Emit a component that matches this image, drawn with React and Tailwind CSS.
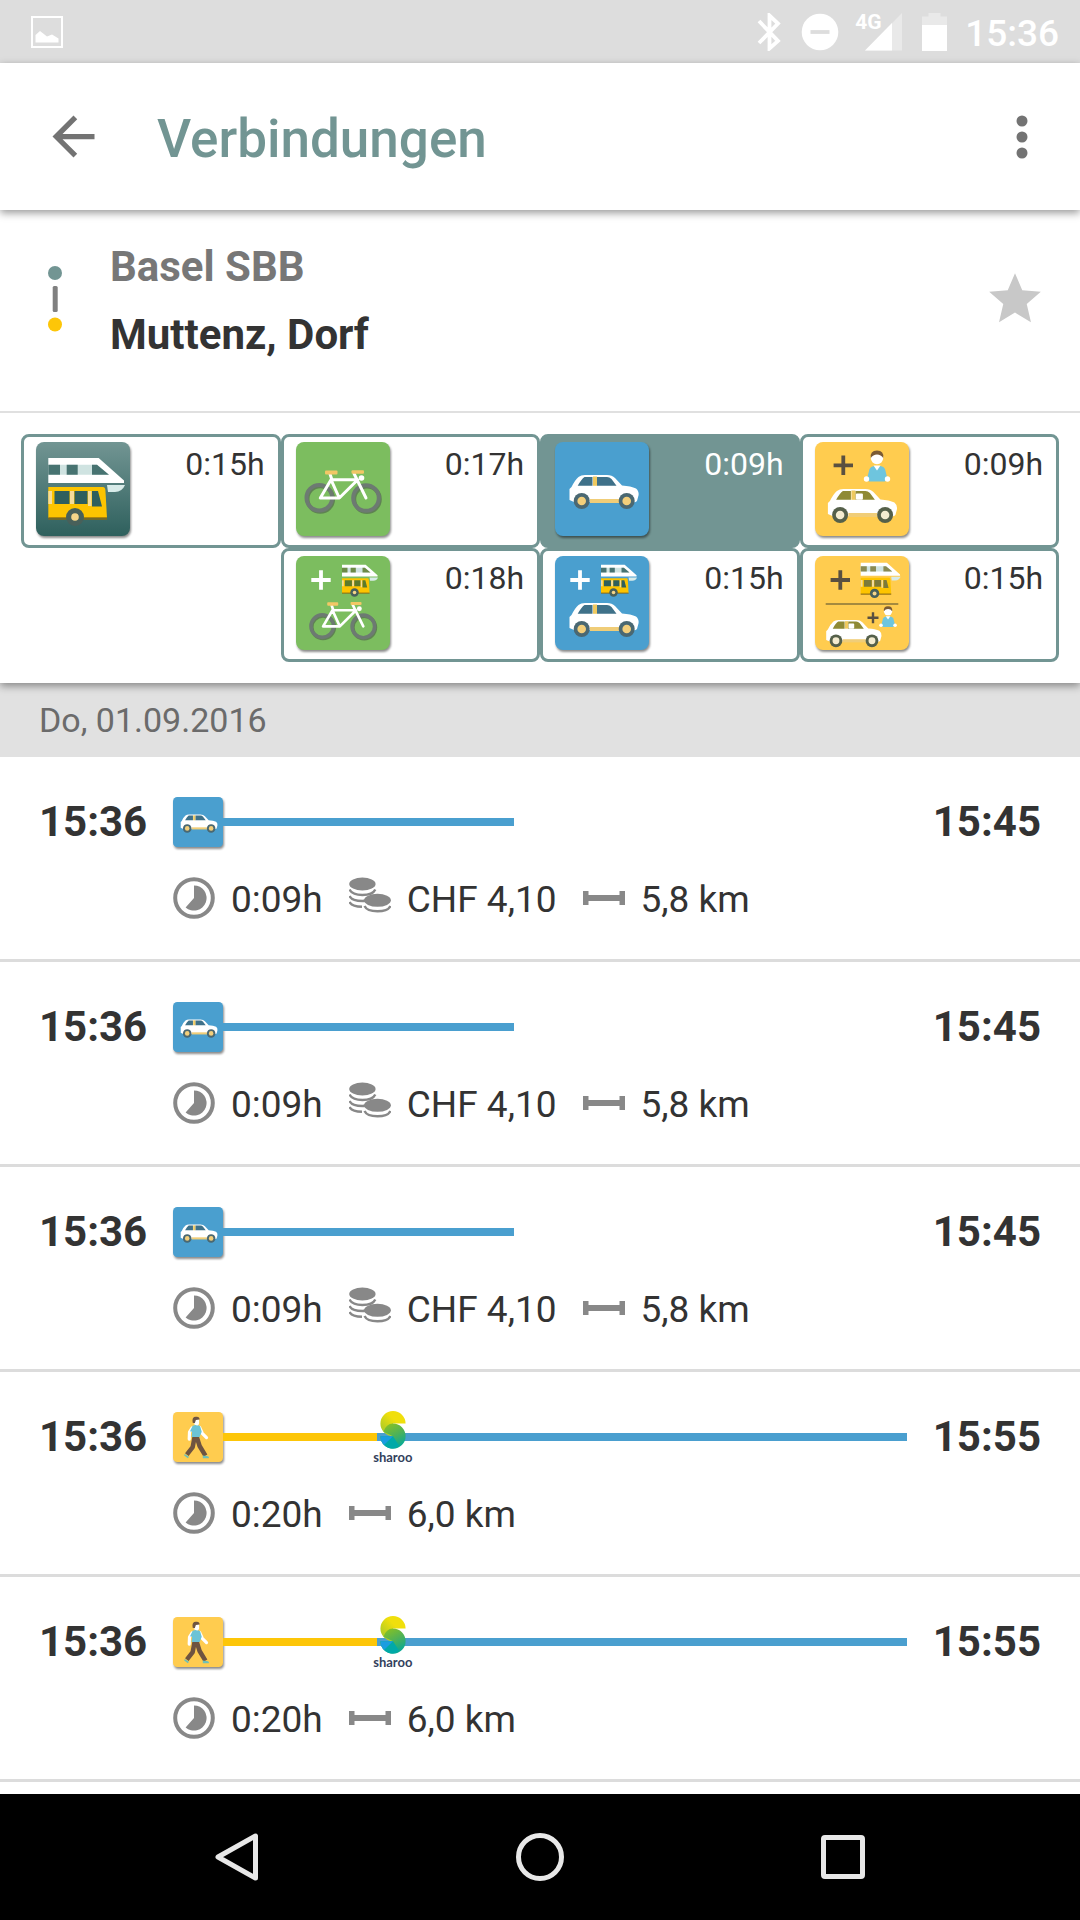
import React, { useState } from 'react';

const Tile = ({ color, size = 94, label, children }) => (
  <svg
    viewBox="0 0 94 94"
    width={size}
    height={size}
    role="img"
    aria-label={label}
    className="shrink-0 drop-shadow-[1px_2px_1px_rgba(0,0,0,0.45)]"
  >
    <defs>
      <linearGradient id="tealTile" x1="0" y1="0" x2="0" y2="1">
        <stop offset="0" stopColor="#729593" />
        <stop offset="1" stopColor="#2e605d" />
      </linearGradient>
    </defs>
    <rect width="94" height="94" rx="8" fill={color} />
    {children}
  </svg>
);

const TrainBus = ({ glass = '#2f5f5d', transform }) => (
  <g transform={transform}>
    <path d="M12.3 16H62.7L88 38.5V41H12.3Z" fill="#fff" />
    <path d="M12.3 22.7H61L73 32.7H12.3Z" fill="#cfe3e1" />
    <path d="M12.3 22.7H24V32.7H12.3ZM30.7 22.7H41.7V32.7H30.7ZM56 22.7H61L73 32.7H56Z" fill={glass} opacity="0.85" />
    <path d="M71 43H89Q86 50 79 50H72Z" fill="#d8ebe9" />
    <path d="M12.3 45H67Q69 45 69.4 48L71 76H12.3Z" fill="#fdc400" />
    <path d="M12.3 75H71V78H12.3Z" fill="#8a6a10" opacity="0.7" />
    <path d="M12.3 49H16V62H12.3ZM34 49H38V62H34ZM52 49H55.5V64H52Z" fill="#f5dc9a" />
    <path d="M18.5 49H33.5V62H18.5ZM38.5 49H51.5V62H38.5ZM56 49H62L66 64.5H56Z" fill={glass} />
    <circle cx="39" cy="75" r="9" fill="#48605a" />
    <circle cx="39" cy="75" r="3.8" fill="#f5d58a" />
  </g>
);

const Bike = ({ transform }) => (
  <g transform={transform} fill="none">
    <g stroke="#4d5c4a" strokeOpacity="0.6" strokeWidth="4">
      <circle cx="24.3" cy="57" r="12.8" />
      <circle cx="71" cy="57.3" r="12.8" />
    </g>
    <g stroke="#6d7a72" strokeWidth="4">
      <circle cx="23.3" cy="55.7" r="12.8" />
      <circle cx="70" cy="56" r="12.8" />
    </g>
    <path d="M35 37.7L24.3 56H43.3L61.7 37.7H35L43.3 56M34 32L36 38M58 31.5L70 56" stroke="#fff" strokeWidth="3" strokeLinejoin="round" strokeLinecap="round" />
    <circle cx="65.5" cy="36" r="2.8" fill="#fff" />
    <rect x="29" y="28.5" width="12.5" height="4" rx="1" fill="#f2c766" />
    <rect x="55.5" y="28.3" width="12.5" height="3.4" rx="1" fill="#f2c766" />
  </g>
);

const Car = ({ glass = '#3f7189', ring = '#4a6872', hub = '#f3cf7b', driver, transform }) => (
  <g transform={transform}>
    <path d="M14.500 58V47L16.500 45Q20 38 23.500 35Q26 33 30 33H52Q57 33 60 36L67 43.500Q76 44 81 46.500Q84 49 83.600 53L82 59Q80 61 78 60H62V59H36V60H19Z" fill="#fff" />
    <path d="M35 57H64V61H35Z" fill="#f0cd78" />
    <path d="M22.700 43.800Q26.500 37 29.500 35H37.500V43.800ZM42 35H52Q54.500 35 56.500 37L61.500 43.800H42Z" fill={glass} />
    <path d="M38 34.500H42V43.800H38Z" fill="#efc95f" />
    {driver && <rect x="42.500" y="37.500" width="7" height="6.300" rx="1" fill="#fff" />}
    <circle cx="26.700" cy="59" r="8" fill={ring} />
    <circle cx="71.700" cy="59" r="8" fill={ring} />
    <circle cx="26.700" cy="59" r="4.300" fill={hub} />
    <circle cx="71.700" cy="59" r="4.300" fill={hub} />
  </g>
);

const Person = ({ transform }) => (
  <g transform={transform}>
    <path d="M52 37L54.500 27Q55.500 24.500 59 24H65.500Q69 24.500 70 27L72.500 37L70 39.500H54Z" fill="#6ec5de" />
    <path d="M58.500 23.500H65.500L62 28.500Z" fill="#fff" />
    <circle cx="62" cy="16" r="6.200" fill="#fff" />
    <path d="M55.800 16Q54.800 8.500 62 8.500T68.200 16Q66 12.500 62 12.500T55.800 16Z" fill="#7a5a34" />
    <circle cx="51.500" cy="37" r="2.700" fill="#fff" />
    <circle cx="72.500" cy="37" r="2.700" fill="#fff" />
  </g>
);

const Plus = ({ x, y, r = 9.7, w = 3.8, color = '#fff' }) => (
  <path d={`M${x - r} ${y}H${x + r}M${x} ${y - r}V${y + r}`} stroke={color} strokeWidth={w} />
);

const YELLOW_CAR = { glass: '#8f8a35', ring: '#55604a', hub: '#f4ecd0', driver: true };

const tiles = {
  transit: () => (
    <Tile color="url(#tealTile)" label="ÖV">
      <TrainBus />
    </Tile>
  ),
  bike: () => (
    <Tile color="#7cbd5f" label="Velo">
      <Bike />
    </Tile>
  ),
  car: (size) => (
    <Tile color="#4a9fcf" label="Auto" size={size}>
      <Car />
    </Tile>
  ),
  ride: () => (
    <Tile color="#ffcc4f" label="Mitfahren">
      <Plus x={28.3} y={23.3} color="#5a5040" />
      <Person />
      <Car {...YELLOW_CAR} transform="translate(-1.6 14)" />
    </Tile>
  ),
  bikeTransit: () => (
    <Tile color="#7cbd5f" label="Velo und ÖV">
      <Plus x={25} y={24} />
      <TrainBus transform="translate(40.2 1.2) scale(0.47)" glass="#5b7a2c" />
      <Bike transform="translate(5.7 21.1) scale(0.88)" />
    </Tile>
  ),
  carTransit: () => (
    <Tile color="#4a9fcf" label="Auto und ÖV">
      <Plus x={25} y={24} />
      <TrainBus transform="translate(40.2 1.2) scale(0.47)" />
      <Car transform="translate(0 14)" />
    </Tile>
  ),
  rideTransit: () => (
    <Tile color="#ffcc4f" label="Mitfahren und ÖV">
      <Plus x={25.3} y={24} color="#5a5040" />
      <TrainBus transform="translate(39.3 -1.6) scale(0.52)" glass="#7c7a3a" />
      <path d="M10.7 48H83.3" stroke="#a58a3e" strokeWidth="2" />
      <Plus x={58} y={61.7} r={5.5} w={2.4} color="#5a5040" />
      <Person transform="translate(31.5 44.5) scale(0.67)" />
      <Car {...YELLOW_CAR} transform="translate(-0.4 37.6) scale(0.8)" />
    </Tile>
  ),
  walk: (size) => (
    <Tile color="#ffcc4f" label="Zu Fuss" size={size}>
      <path d="M44 45L50 64L61 82M41 45L37 66L26 80" fill="none" stroke="#6f5440" strokeWidth="8.5" strokeLinejoin="round" />
      <path d="M22 79L30 84L28 87L21 82ZM56 82L66 83Q69 86 67 87H56Z" fill="#6fc0b8" />
      <path d="M36 30L31 38L30.5 51M50 29L55 40L63 48" fill="none" stroke="#fff" strokeWidth="6" strokeLinecap="round" strokeLinejoin="round" />
      <path d="M37 26Q44 22 51 27L54 37L50 47H35L36 37L32 36Z" fill="#6cc3d6" />
      <path d="M39 12H49V22Q48 26 44 25Q39 24 39 20Z" fill="#fff" />
      <path d="M37 20Q35 9 43 9Q50 8 50 14L43 15L41 21Z" fill="#6f5440" />
    </Tile>
  ),
};

const modes = [
  { id: 'transit', time: '0:15h' },
  { id: 'bike', time: '0:17h' },
  { id: 'car', time: '0:09h' },
  { id: 'ride', time: '0:09h' },
  { id: 'bikeTransit', time: '0:18h', place: 'col-start-2' },
  { id: 'carTransit', time: '0:15h' },
  { id: 'rideTransit', time: '0:15h' },
];

const carTrip = {
  from: '15:36',
  to: '15:45',
  icon: 'car',
  legs: [{ color: 'bg-[#4a9fcf]', share: 42.5 }],
  duration: '0:09h',
  price: 'CHF 4,10',
  distance: '5,8 km',
};

const sharedTrip = {
  from: '15:36',
  to: '15:55',
  icon: 'walk',
  legs: [
    { color: 'bg-[#fdc608]', share: 22.5 },
    { color: 'bg-[#4a9fcf]', share: 77.5, logo: true },
  ],
  duration: '0:20h',
  distance: '6,0 km',
};

const trips = [carTrip, carTrip, carTrip, sharedTrip, sharedTrip];

const DurationIcon = () => (
  <svg viewBox="0 0 42 42" className="size-[42px]" aria-hidden="true">
    <circle cx="21" cy="21" r="18.8" fill="none" stroke="#888" strokeWidth="4" />
    <path d="M21 21V8.4A12.6 12.6 0 1 1 12.6 30.4Z" fill="#888" />
  </svg>
);

const CoinsIcon = () => (
  <svg viewBox="0 0 42 42" className="size-[42px]" aria-hidden="true">
    <g fill="none" stroke="#888" strokeWidth="2.4">
      <path d="M0.5 12.5Q3 18 13.4 18T26.3 12.5" />
      <path d="M0.5 19Q3 24 13.4 24Q15 24 17 23.5" />
      <path d="M0.5 25Q3 29.5 13 29.8" />
      <path d="M15.5 29Q18 34.3 28.5 34.3T41.5 29" />
    </g>
    <ellipse cx="13.4" cy="7" rx="13.2" ry="6.4" fill="#888" />
    <ellipse cx="28.5" cy="23.3" rx="13.4" ry="6.5" fill="#888" />
  </svg>
);

const DistanceIcon = () => (
  <svg viewBox="0 0 42 42" className="size-[42px]" aria-hidden="true">
    <path d="M0 14H5.5V18H36.5V14H42V28H36.5V24H5.5V28H0Z" fill="#888" />
  </svg>
);

const SharooLogo = () => (
  <div className="absolute -left-1 -top-[22px] flex w-10 flex-col items-center">
    <svg viewBox="0 0 26 38" className="h-[38px] w-[26px]" aria-hidden="true">
      <defs>
        <linearGradient id="sharooTop" x1="0" y1="1" x2="1" y2="0">
          <stop offset="0.1" stopColor="#a5c92a" />
          <stop offset="0.6" stopColor="#f0df0c" />
        </linearGradient>
        <linearGradient id="sharooLow" x1="0.2" y1="0" x2="0.7" y2="1">
          <stop offset="0" stopColor="#8cc21f" />
          <stop offset="0.5" stopColor="#4fb257" />
          <stop offset="1" stopColor="#00a99d" />
        </linearGradient>
      </defs>
      <path d="M13 12.6H25.6A12.6 12.6 0 1 0 13 25.2Z" fill="url(#sharooTop)" />
      <path d="M13 25.2L3.5 20.8Q6 12.8 13 12.6A12.6 12.6 0 1 1 0.4 25.2Z" fill="url(#sharooLow)" />
      <path d="M0.4 25.2H13L19 34.5Q14 39 8 36.8Q0.8 33.5 0.4 25.2Z" fill="#00a9a8" />
      <path d="M0.4 25.2H13L4 34Q0.6 30.5 0.4 25.2Z" fill="#1b9de0" />
    </svg>
    <span className="font-[Lato] text-[13px] leading-4 font-bold text-[#333f5c]">sharoo</span>
  </div>
);

const Detail = ({ icon, children }) => (
  <span className="flex items-center gap-4">
    {icon}
    <span className="pt-1">{children}</span>
  </span>
);

const Trip = ({ trip }) => (
  <li className="grid grid-cols-[134px_1fr_auto] gap-y-7 border-b-[3px] border-[#dcdcdc] px-[39px] pt-10 pb-[38px]">
    <time className="text-[42px] leading-[50px] font-bold">{trip.from}</time>
    <div className="flex items-center">
      {tiles[trip.icon](50)}
      <div className="flex flex-1">
        {trip.legs.map((leg, i) => (
          <div key={i} className={`relative h-2 ${leg.color}`} style={{ width: `${leg.share}%` }}>
            {leg.logo && <SharooLogo />}
          </div>
        ))}
      </div>
    </div>
    <time className="pl-[26px] text-[42px] leading-[50px] font-bold">{trip.to}</time>
    <div className="col-span-2 col-start-2 flex items-center gap-[26px] text-[37px] leading-[42px]">
      <Detail icon={<DurationIcon />}>{trip.duration}</Detail>
      {trip.price && <Detail icon={<CoinsIcon />}>{trip.price}</Detail>}
      <Detail icon={<DistanceIcon />}>{trip.distance}</Detail>
    </div>
  </li>
);

const StatusBar = () => (
  <div className="flex h-[63px] items-center bg-[#dddddd] pr-[21px] pl-[31px] text-white">
    <svg viewBox="0 0 32 32" className="size-8" aria-hidden="true">
      <path d="M1 1H31V31H1Z" fill="none" stroke="#fff" strokeWidth="2" />
      <path d="M4.500 26.500V19L9 15L16 20.500L21 18.500L27.500 22.500V26.500Z" fill="#fff" />
    </svg>
    <div className="ml-auto flex items-center gap-5">
      <svg viewBox="0 0 24 38" className="h-[38px] w-6" aria-hidden="true">
        <path d="M2 8L21 28L12.500 35.500V2.500L21 10.500L2 30" fill="none" stroke="#fff" strokeWidth="3.8" />
      </svg>
      <svg viewBox="0 0 38 38" className="size-[38px]" aria-hidden="true">
        <circle cx="19" cy="19" r="18.3" fill="#fff" />
        <path d="M9.500 19H28.500" stroke="#ddd" strokeWidth="3.8" />
      </svg>
      <div className="relative -ml-1 flex w-[47px] justify-end">
        <svg viewBox="0 0 37 38" className="h-[38px] w-[37px]" aria-hidden="true">
          <path d="M0 37.500L37 0V37.500Z" fill="#e9e9e9" />
          <path d="M0 37.500L27 10V37.500Z" fill="#fff" />
        </svg>
        <span className="absolute -top-px left-0 text-[21px] leading-5 font-bold">4G</span>
      </div>
      <svg viewBox="0 0 25 38" className="h-[38px] w-[25px]" aria-hidden="true">
        <path d="M0 3.500H6.500V0H18.500V3.500H25V38H0Z" fill="#e9e9e9" />
        <path d="M0 12H25V38H0Z" fill="#fff" />
      </svg>
      <span className="-ml-0.5 pt-1 text-[37px] leading-10 font-medium">15:36</span>
    </div>
  </div>
);

const AppBar = () => (
  <header className="relative z-20 flex h-[147px] items-center bg-white pr-[51px] pl-[42px] shadow-[0_3px_8px_rgba(0,0,0,0.4)]">
    <button type="button" aria-label="Zurück">
      <svg viewBox="0 0 24 24" className="size-[63px]" fill="#737373">
        <path d="M20 11H7.830l5.590-5.590L12 4l-8 8 8 8 1.410-1.410L7.830 13H20v-2z" />
      </svg>
    </button>
    <h1 className="pt-1 pl-[52px] text-[53px] leading-[60px] font-medium text-[#729593]">Verbindungen</h1>
    <button type="button" aria-label="Mehr" className="ml-auto">
      <svg viewBox="0 0 14 44" className="h-11 w-[14px]" fill="#737373">
        <circle cx="7" cy="6" r="5.500" />
        <circle cx="7" cy="22" r="5.500" />
        <circle cx="7" cy="38" r="5.500" />
      </svg>
    </button>
  </header>
);

const RoutePanel = () => (
  <section className="flex items-center border-b-2 border-[#e0e0e0] pt-[19px] pr-[34px] pb-[42px] pl-12">
    <svg viewBox="0 0 14 66" className="h-[66px] w-[14px]" aria-hidden="true">
      <circle cx="7" cy="7" r="7" fill="#729593" />
      <rect x="4.700" y="20" width="5" height="26" rx="1.500" fill="#808080" />
      <circle cx="7" cy="58.500" r="7" fill="#fdc608" />
    </svg>
    <div className="flex-1 pt-1 pl-12 text-[42px] leading-[68px] font-bold">
      <p className="text-[#777777]">Basel SBB</p>
      <p>Muttenz, Dorf</p>
    </div>
    <button type="button" aria-label="Favorit">
      <svg viewBox="0 0 24 24" className="size-[62px]" fill="#c8c8c8">
        <path d="M12 17.270L18.180 21l-1.640-7.030L22 9.240l-7.190-.61L12 2 9.190 8.630 2 9.240l5.460 4.730L5.820 21z" />
      </svg>
    </button>
  </section>
);

const SystemNav = () => (
  <nav className="flex h-[126px] items-center justify-around bg-black px-[85px]">
    <button type="button" aria-label="System zurück">
      <svg viewBox="0 0 48 48" className="size-12" fill="none" stroke="#e8e8e8" strokeWidth="5" strokeLinejoin="round">
        <path d="M42.500 3V45L5 24Z" />
      </svg>
    </button>
    <button type="button" aria-label="Startbildschirm">
      <svg viewBox="0 0 48 48" className="size-12" fill="none" stroke="#e8e8e8" strokeWidth="5">
        <circle cx="24" cy="24" r="21.500" />
      </svg>
    </button>
    <button type="button" aria-label="Letzte Apps">
      <svg viewBox="0 0 48 48" className="size-12" fill="none" stroke="#e8e8e8" strokeWidth="5">
        <rect x="4.500" y="4.500" width="39" height="39" rx="1.500" />
      </svg>
    </button>
  </nav>
);

export default function App() {
  const [mode, setMode] = useState('car');

  return (
    <div className="flex min-h-screen flex-col bg-white font-[Roboto,sans-serif] text-[#333333]">
      <StatusBar />
      <AppBar />

      <div className="relative z-10 bg-white shadow-[0_3px_8px_rgba(0,0,0,0.4)]">
        <RoutePanel />
        <div className="grid grid-cols-4 p-[21px]">
          {modes.map((m) => (
            <button
              key={m.id}
              type="button"
              aria-pressed={mode === m.id}
              onClick={() => setMode(m.id)}
              className={`flex h-[114px] items-start justify-between rounded-lg border-[3px] border-[#729593] pt-[5px] pr-[13px] pl-3 text-[32px] leading-[44px] ${
                mode === m.id ? 'bg-[#729593] text-white' : 'bg-white'
              } ${m.place || ''}`}
            >
              {tiles[m.id]()}
              {m.time}
            </button>
          ))}
        </div>
      </div>

      <main className="flex-1">
        <h2 className="bg-[#e1e1e1] px-[39px] pt-0.5 pb-0.5 text-[34px] leading-[70px] text-[#6b6b6b]">Do, 01.09.2016</h2>
        <ul>
          {trips.map((trip, i) => (
            <Trip key={i} trip={trip} />
          ))}
        </ul>
      </main>

      <SystemNav />
    </div>
  );
}
